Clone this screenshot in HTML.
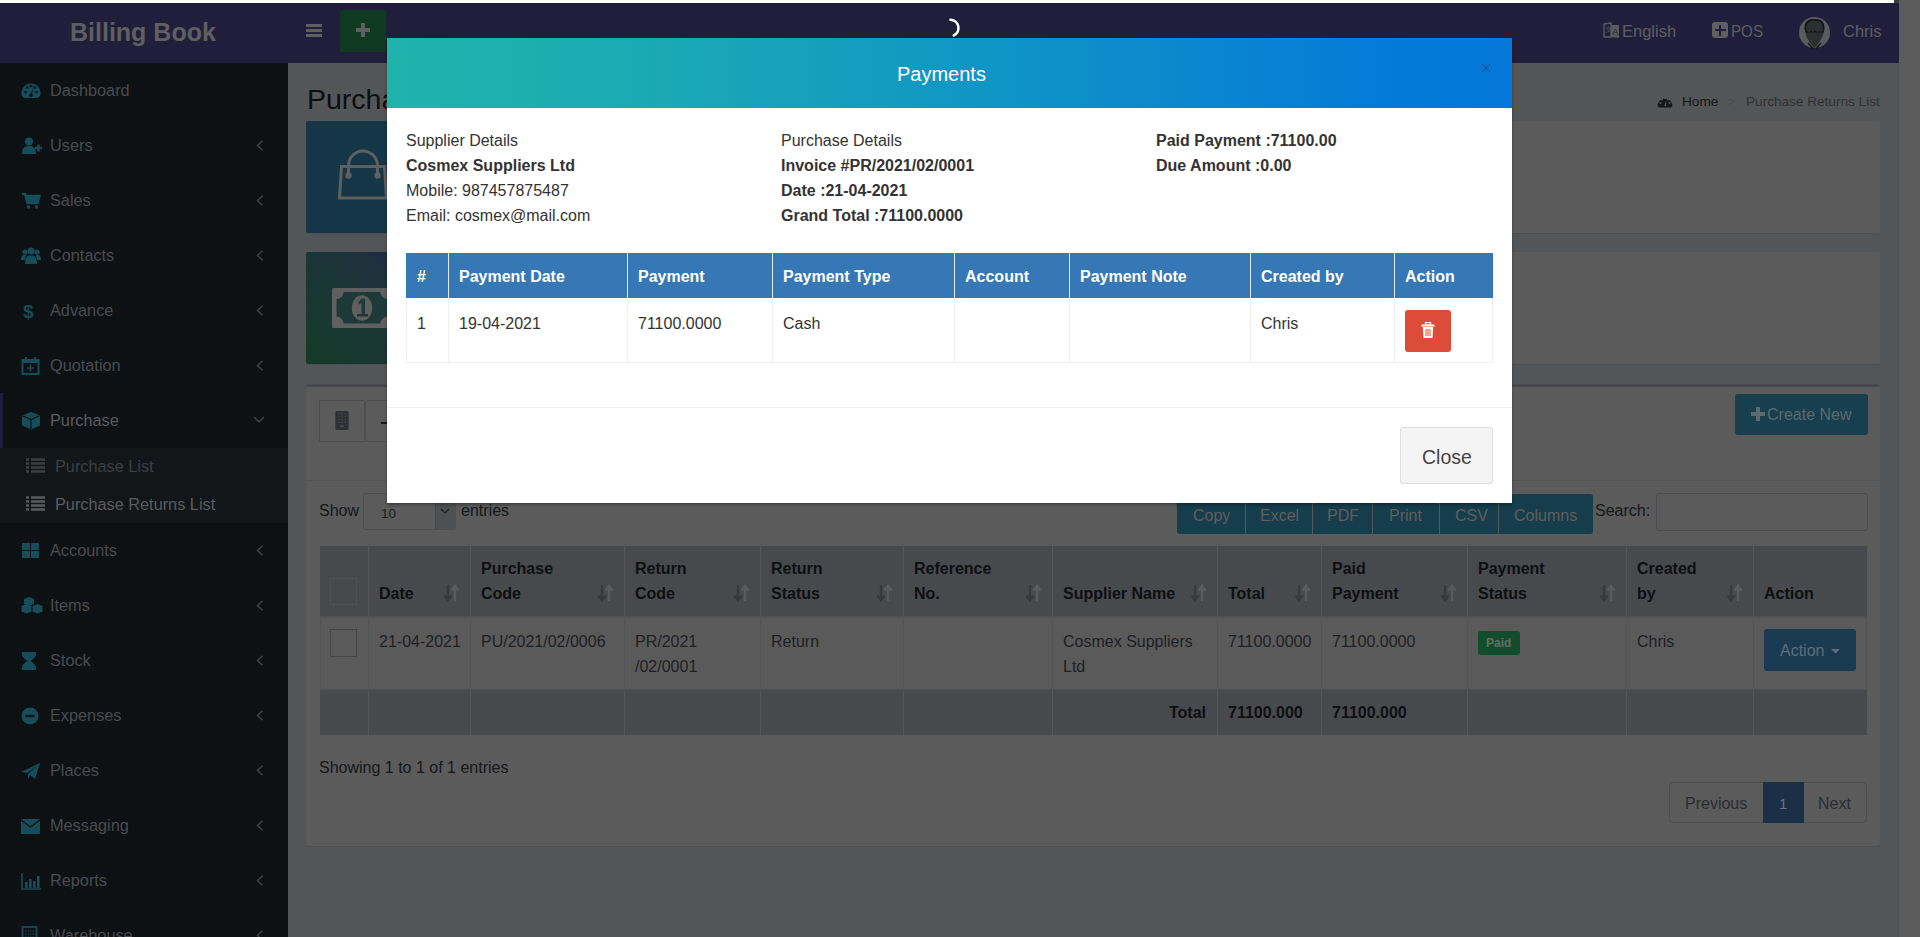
<!DOCTYPE html>
<html><head><meta charset="utf-8">
<style>
html,body{margin:0;padding:0}
body{-webkit-font-smoothing:antialiased;width:1920px;height:937px;overflow:hidden;position:relative;background:#545557;font-family:"Liberation Sans",sans-serif;font-size:16px;color:#333}
.a{position:absolute}
.t{position:absolute;white-space:nowrap;line-height:20px}
.b{font-weight:bold}
/* sidebar */
.si{position:absolute;left:50px;font-size:16.3px;color:#4a4b50;line-height:20px;white-space:nowrap}
.chev{position:absolute;left:257px;width:7px;height:10px}
.ic{position:absolute;left:21px}
</style></head>
<body>
<!-- top white strip -->
<div class="a" style="left:0;top:0;width:1894px;height:3px;background:#fff"></div>
<div class="a" style="left:1894px;top:0;width:5px;height:3px;background:#3c3c3c"></div>
<!-- right strip -->
<div class="a" style="left:1899px;top:0;width:21px;height:937px;background:#5c5c5c"></div>
<!-- navbar -->
<div class="a" style="left:0;top:3px;width:1899px;height:60px;background:#211e3c"></div>
<div class="t b" style="left:70px;top:20px;font-size:25px;line-height:25px;color:#5f5f5f">Billing Book</div>
<!-- hamburger -->
<div class="a" style="left:306px;top:24px;width:16px;height:3px;background:#5f5f60"></div>
<div class="a" style="left:306px;top:29px;width:16px;height:3px;background:#5f5f60"></div>
<div class="a" style="left:306px;top:34px;width:16px;height:3px;background:#5f5f60"></div>
<!-- green plus -->
<div class="a" style="left:340px;top:10px;width:46px;height:42px;background:#0e3a22;border-radius:2px"></div>
<div class="a" style="left:356px;top:28px;width:14px;height:4px;background:#5f5f60"></div>
<div class="a" style="left:361px;top:23px;width:4px;height:14px;background:#5f5f60"></div>
<!-- spinner -->
<svg class="a" style="left:940px;top:17px" width="24" height="22" viewBox="0 0 24 22"><path d="M10.5 2.8 A8.2 8.2 0 0 1 13.8 18.4" stroke="#fff" stroke-width="2.6" fill="none" stroke-linecap="round"/></svg>
<!-- English -->
<svg class="a" style="left:1603px;top:22px" width="17" height="17" viewBox="0 0 17 17"><path d="M1 2 L8 1 L8 15 L1 15 Z" fill="none" stroke="#5a5a5c" stroke-width="1.4"/><path d="M8 3 L16 3 L16 16 L8 15" fill="#5a5a5c"/><text x="9.2" y="12.5" font-size="9" font-family="Liberation Sans" fill="#211e3c">A</text><text x="2" y="10" font-size="7" font-family="Liberation Sans" fill="#5a5a5c">文</text></svg>
<div class="t" style="left:1622px;top:21px;font-size:16.5px;color:#5f5f60">English</div>
<!-- POS -->
<div class="a" style="left:1712px;top:22px;width:16px;height:16px;background:#5f5f60;border-radius:3px"></div>
<div class="a" style="left:1714.5px;top:29px;width:11px;height:2px;background:#211e3c"></div>
<div class="a" style="left:1719px;top:24.5px;width:2px;height:11px;background:#211e3c"></div>
<div class="t" style="left:1731px;top:21px;font-size:16.5px;transform:scaleX(0.92);transform-origin:0 0;color:#5f5f60">POS</div>
<!-- avatar -->
<svg class="a" style="left:1799px;top:17px" width="32" height="32" viewBox="0 0 32 32"><circle cx="15.5" cy="15.5" r="15.5" fill="#5c5c5e"/><path d="M6 12 C6 4 9.5 2.5 15.5 2.5 C21.5 2.5 25 4 25 12 C25 18 22 24 15.5 31 C9 24 6 18 6 12Z" fill="#2b2f30"/><path d="M6.3 13 C5.8 5 9.5 2.8 15.5 2.8 C21.5 2.8 25.2 5 24.7 13" fill="none" stroke="#0f1112" stroke-width="1.6"/><path d="M6 14.5 H25" stroke="#0f1112" stroke-width="1.8"/><path d="M8.5 14 h3 M13 14 h2 M17 14 h3 M21 14 h2" stroke="#50524f" stroke-width="0.7"/><path d="M9 26 L14 31.5 M22 26 L17 31.5" stroke="#0f1112" stroke-width="1.4"/></svg>
<div class="t" style="left:1843px;top:21px;font-size:16.5px;color:#5f5f60">Chris</div>


<!-- sidebar -->
<div class="a" style="left:0;top:63px;width:288px;height:874px;background:#0d1113"></div>
<div class="a" style="left:0;top:393px;width:3px;height:55px;background:#1f1d3d"></div>
<div class="a" style="left:0;top:448px;width:288px;height:75px;background:#121619"></div>
<svg class="a" style="left:26px;top:456.7px" width="20" height="17" viewBox="0 0 20 17"><path d="M0 2.5h3M0 6.5h3M0 10.5h3M0 14.5h3" stroke="#3c3e42" stroke-width="2.4"/><path d="M5 2.5h14M5 6.5h14M5 10.5h14M5 14.5h14" stroke="#3c3e42" stroke-width="2.4"/></svg>
<div class="si" style="left:55px;top:455.7px;color:#3c3e42">Purchase List</div>
<svg class="a" style="left:26px;top:494.5px" width="20" height="17" viewBox="0 0 20 17"><path d="M0 2.5h3M0 6.5h3M0 10.5h3M0 14.5h3" stroke="#5a5b5f" stroke-width="2.4"/><path d="M5 2.5h14M5 6.5h14M5 10.5h14M5 14.5h14" stroke="#5a5b5f" stroke-width="2.4"/></svg>
<div class="si" style="left:55px;top:493.5px;color:#5a5b5f">Purchase Returns List</div>
<svg class="a" style="left:21px;top:80.5px" width="24" height="20" viewBox="0 0 24 20"><path d="M1 15 A9.5 9.5 0 1 1 19 15 L17 17 L3 17 Z" fill="#174c5a"/><circle cx="4.5" cy="11" r="1.3" fill="#0d1113"/><circle cx="6.5" cy="6.5" r="1.3" fill="#0d1113"/><circle cx="10" cy="5" r="1.3" fill="#0d1113"/><circle cx="15.5" cy="11" r="1.3" fill="#0d1113"/><circle cx="13.5" cy="6.5" r="1.3" fill="#0d1113"/><path d="M9 15 L12 7 L11 15 Z" fill="#0d1113"/><circle cx="10" cy="14.5" r="1.8" fill="#0d1113"/></svg>
<div class="si" style="top:80.1px;color:#4a4b50">Dashboard</div>
<svg class="a" style="left:21px;top:135.5px" width="24" height="20" viewBox="0 0 24 20"><circle cx="8" cy="5.5" r="4" fill="#174c5a"/><path d="M1 18 C1 11 4 10 8 10 C12 10 15 11 15 18 Z" fill="#174c5a"/><path d="M14 12 h7 M17.5 8.5 v7" stroke="#174c5a" stroke-width="2.4"/></svg>
<div class="si" style="top:135.1px;color:#4a4b50">Users</div>
<svg class="a" style="left:256px;top:140.0px" width="8" height="11" viewBox="0 0 8 11"><path d="M6.5 0.8 L1.5 5.5 L6.5 10.2" stroke="#3f4145" stroke-width="1.5" fill="none"/></svg>
<svg class="a" style="left:21px;top:190.5px" width="24" height="20" viewBox="0 0 24 20"><path d="M1 3 h3 l2.5 9 h10 l2-7 h-13" fill="none" stroke="#174c5a" stroke-width="2.4"/><rect x="6" y="5" width="12" height="6" fill="#174c5a"/><circle cx="7.5" cy="16" r="1.8" fill="#174c5a"/><circle cx="15.5" cy="16" r="1.8" fill="#174c5a"/></svg>
<div class="si" style="top:190.1px;color:#4a4b50">Sales</div>
<svg class="a" style="left:256px;top:195.0px" width="8" height="11" viewBox="0 0 8 11"><path d="M6.5 0.8 L1.5 5.5 L6.5 10.2" stroke="#3f4145" stroke-width="1.5" fill="none"/></svg>
<svg class="a" style="left:21px;top:245.5px" width="24" height="20" viewBox="0 0 24 20"><circle cx="10" cy="5" r="3.5" fill="#174c5a"/><circle cx="4" cy="6" r="2.6" fill="#174c5a"/><circle cx="16" cy="6" r="2.6" fill="#174c5a"/><path d="M4 18 C4 11 6 9.5 10 9.5 C14 9.5 16 11 16 18 Z" fill="#174c5a"/><path d="M0 14 C0 10 1.5 9 4 9 L5 9 L4 14 Z M20 14 C20 10 18.5 9 16 9 L15 9 L16 14 Z" fill="#174c5a"/></svg>
<div class="si" style="top:245.1px;color:#4a4b50">Contacts</div>
<svg class="a" style="left:256px;top:250.0px" width="8" height="11" viewBox="0 0 8 11"><path d="M6.5 0.8 L1.5 5.5 L6.5 10.2" stroke="#3f4145" stroke-width="1.5" fill="none"/></svg>
<svg class="a" style="left:21px;top:300.5px" width="24" height="20" viewBox="0 0 24 20"><text x="2" y="17" font-family="Liberation Sans" font-weight="bold" font-size="19" fill="#174c5a">$</text></svg>
<div class="si" style="top:300.1px;color:#4a4b50">Advance</div>
<svg class="a" style="left:256px;top:305.0px" width="8" height="11" viewBox="0 0 8 11"><path d="M6.5 0.8 L1.5 5.5 L6.5 10.2" stroke="#3f4145" stroke-width="1.5" fill="none"/></svg>
<svg class="a" style="left:21px;top:355.5px" width="24" height="20" viewBox="0 0 24 20"><rect x="1.5" y="4" width="16" height="14" fill="none" stroke="#174c5a" stroke-width="2"/><rect x="1.5" y="4" width="16" height="3" fill="#174c5a"/><path d="M5 1 v5 M14 1 v5" stroke="#174c5a" stroke-width="2"/><path d="M6 12 h7 M9.5 8.5 v7" stroke="#174c5a" stroke-width="1.6"/></svg>
<div class="si" style="top:355.1px;color:#4a4b50">Quotation</div>
<svg class="a" style="left:256px;top:360.0px" width="8" height="11" viewBox="0 0 8 11"><path d="M6.5 0.8 L1.5 5.5 L6.5 10.2" stroke="#3f4145" stroke-width="1.5" fill="none"/></svg>
<svg class="a" style="left:21px;top:410.5px" width="24" height="20" viewBox="0 0 24 20"><path d="M10 1 L19 4.5 L19 14.5 L10 18.5 L1 14.5 L1 4.5 Z" fill="#174c5a"/><path d="M3 5.5 L10 8.5 L17 5.5 L10 3 Z" fill="#0d1113" opacity="0.0"/><path d="M10 8.5 L10 18 M1.5 4.8 L10 8.5 L18.5 4.8" stroke="#0d1113" stroke-width="1.2" fill="none"/></svg>
<div class="si" style="top:410.1px;color:#5b5b5e">Purchase</div>
<svg class="a" style="left:253px;top:415.5px" width="12" height="8" viewBox="0 0 12 8"><path d="M1 1 L6 6 L11 1" stroke="#3f4145" stroke-width="1.5" fill="none"/></svg>
<svg class="a" style="left:21px;top:540.5px" width="24" height="20" viewBox="0 0 24 20"><rect x="1" y="2" width="8" height="7" fill="#174c5a"/><rect x="10" y="2" width="8" height="7" fill="#174c5a"/><rect x="1" y="10" width="8" height="7" fill="#174c5a"/><rect x="10" y="10" width="8" height="7" fill="#174c5a"/></svg>
<div class="si" style="top:540.1px">Accounts</div>
<svg class="a" style="left:256px;top:545.0px" width="8" height="11" viewBox="0 0 8 11"><path d="M6.5 0.8 L1.5 5.5 L6.5 10.2" stroke="#3f4145" stroke-width="1.5" fill="none"/></svg>
<svg class="a" style="left:21px;top:595.5px" width="24" height="20" viewBox="0 0 24 20"><path d="M8 1 L13 3 L13 8 L8 10 L3 8 L3 3Z" fill="#174c5a"/><path d="M5.5 8 L10.5 10 L10.5 15.5 L5.5 17.5 L0.5 15.5 L0.5 10Z" fill="#174c5a"/><path d="M16.5 8 L21.5 10 L21.5 15.5 L16.5 17.5 L11.5 15.5 L11.5 10Z" fill="#174c5a"/></svg>
<div class="si" style="top:595.1px">Items</div>
<svg class="a" style="left:256px;top:600.0px" width="8" height="11" viewBox="0 0 8 11"><path d="M6.5 0.8 L1.5 5.5 L6.5 10.2" stroke="#3f4145" stroke-width="1.5" fill="none"/></svg>
<svg class="a" style="left:21px;top:650.5px" width="24" height="20" viewBox="0 0 24 20"><path d="M1 1 h14 v2 C15 7 10 9 10 10 C10 11 15 13 15 17 v2 h-14 v-2 C1 13 6 11 6 10 C6 9 1 7 1 3Z" fill="#174c5a"/></svg>
<div class="si" style="top:650.1px">Stock</div>
<svg class="a" style="left:256px;top:655.0px" width="8" height="11" viewBox="0 0 8 11"><path d="M6.5 0.8 L1.5 5.5 L6.5 10.2" stroke="#3f4145" stroke-width="1.5" fill="none"/></svg>
<svg class="a" style="left:21px;top:705.5px" width="24" height="20" viewBox="0 0 24 20"><circle cx="9" cy="10" r="8.5" fill="#174c5a"/><rect x="4.5" y="8.8" width="9" height="2.4" fill="#0d1113"/></svg>
<div class="si" style="top:705.1px">Expenses</div>
<svg class="a" style="left:256px;top:710.0px" width="8" height="11" viewBox="0 0 8 11"><path d="M6.5 0.8 L1.5 5.5 L6.5 10.2" stroke="#3f4145" stroke-width="1.5" fill="none"/></svg>
<svg class="a" style="left:21px;top:760.5px" width="24" height="20" viewBox="0 0 24 20"><path d="M0 11 L19 2 L14 18 L9 14 L7 18 L7 13 L16 5 L6 12 Z" fill="#174c5a"/></svg>
<div class="si" style="top:760.1px">Places</div>
<svg class="a" style="left:256px;top:765.0px" width="8" height="11" viewBox="0 0 8 11"><path d="M6.5 0.8 L1.5 5.5 L6.5 10.2" stroke="#3f4145" stroke-width="1.5" fill="none"/></svg>
<svg class="a" style="left:21px;top:815.5px" width="24" height="20" viewBox="0 0 24 20"><rect x="0" y="3" width="19" height="15" rx="1" fill="#174c5a"/><path d="M0 4 L9.5 11 L19 4" stroke="#0d1113" stroke-width="1.2" fill="none"/></svg>
<div class="si" style="top:815.1px">Messaging</div>
<svg class="a" style="left:256px;top:820.0px" width="8" height="11" viewBox="0 0 8 11"><path d="M6.5 0.8 L1.5 5.5 L6.5 10.2" stroke="#3f4145" stroke-width="1.5" fill="none"/></svg>
<svg class="a" style="left:21px;top:870.5px" width="24" height="20" viewBox="0 0 24 20"><path d="M1 2 v16 h19" stroke="#174c5a" stroke-width="1.6" fill="none"/><rect x="4" y="11" width="2.6" height="6" fill="#174c5a"/><rect x="8" y="8" width="2.6" height="9" fill="#174c5a"/><rect x="12" y="10" width="2.6" height="7" fill="#174c5a"/><rect x="16" y="5" width="2.6" height="12" fill="#174c5a"/></svg>
<div class="si" style="top:870.1px">Reports</div>
<svg class="a" style="left:256px;top:875.0px" width="8" height="11" viewBox="0 0 8 11"><path d="M6.5 0.8 L1.5 5.5 L6.5 10.2" stroke="#3f4145" stroke-width="1.5" fill="none"/></svg>
<svg class="a" style="left:21px;top:925.5px" width="24" height="20" viewBox="0 0 24 20"><rect x="1.5" y="1" width="14" height="18" fill="none" stroke="#174c5a" stroke-width="1.8"/><path d="M4 5 h9 M4 8 h9 M4 11 h9 M4 14 h9" stroke="#174c5a" stroke-width="1.2" stroke-dasharray="1.5 1"/></svg>
<div class="si" style="top:925.1px">Warehouse</div>
<svg class="a" style="left:256px;top:930.0px" width="8" height="11" viewBox="0 0 8 11"><path d="M6.5 0.8 L1.5 5.5 L6.5 10.2" stroke="#3f4145" stroke-width="1.5" fill="none"/></svg>


<!-- content -->
<!-- title -->
<div class="t" style="left:307px;top:83px;font-size:28.5px;line-height:32px;color:#0b0e10">Purchase Returns List</div>
<!-- breadcrumb -->
<svg class="a" style="left:1657px;top:95px" width="16" height="13" viewBox="0 0 16 13"><path d="M0.5 11 A7.5 7.5 0 1 1 15.5 11 L14 12.5 L2 12.5 Z" fill="#151719"/><circle cx="3.5" cy="8" r="1.1" fill="#545557"/><circle cx="5" cy="4.5" r="1.1" fill="#545557"/><circle cx="8" cy="3" r="1.1" fill="#545557"/><circle cx="11" cy="4.5" r="1.1" fill="#545557"/><circle cx="12.5" cy="8" r="1.1" fill="#545557"/><path d="M7 11 L9.5 5 L9 11Z" fill="#545557"/></svg>
<div class="t" style="left:1682px;top:92.5px;font-size:13.6px;line-height:18px;color:#151719">Home</div>
<div class="t" style="left:1728px;top:92.5px;font-size:12px;line-height:18px;color:#4a4b4e">&gt;</div>
<div class="t" style="left:1746px;top:92.5px;font-size:13.6px;line-height:18px;color:#2f3133">Purchase Returns List</div>

<!-- info box 1 -->
<div class="a" style="left:306px;top:121px;width:1574px;height:112px;background:#5b5b5b;border-radius:2px;box-shadow:0 1px 0 #4e4f51"></div>
<div class="a" style="left:306px;top:121px;width:112px;height:112px;background:#143646;border-radius:2px 0 0 2px"></div>
<svg class="a" style="left:330px;top:145px" width="60" height="60" viewBox="0 0 60 60"><path d="M18.5 30 V20.5 A14.5 14.5 0 0 1 47.5 20.5 V30" fill="none" stroke="#5f5f60" stroke-width="3"/><path d="M11.5 21.5 H54.5 L56.5 53 H9.5 Z" fill="none" stroke="#5f5f60" stroke-width="3"/><circle cx="18.5" cy="30.5" r="3.2" fill="#5f5f60"/><circle cx="47.5" cy="30.5" r="3.2" fill="#5f5f60"/></svg>

<!-- info box 2 -->
<div class="a" style="left:306px;top:252px;width:1574px;height:112px;background:#5b5b5b;border-radius:2px;box-shadow:0 1px 0 #4e4f51"></div>
<div class="a" style="left:306px;top:252px;width:112px;height:112px;background:linear-gradient(to bottom left,#232a45 0%,#1b3636 50%,#133b28 100%);border-radius:2px 0 0 2px"></div>
<svg class="a" style="left:332px;top:288px" width="60" height="40" viewBox="0 0 60 40"><rect x="0" y="0" width="60" height="40" rx="1.5" fill="#5f5f60"/><path d="M11.5 4 H48.5 A7 7 0 0 0 55.5 11 V28.6 A7 7 0 0 0 48.5 35.6 H11.5 A7 7 0 0 0 4.5 28.6 V11 A7 7 0 0 0 11.5 4 Z" fill="#1e3a36"/><ellipse cx="30" cy="20" rx="10.2" ry="12.8" fill="#5f5f60"/><path d="M29.5 10.5 H33 V26 H36 V28.5 H25 V26 H29.5 V15 L26.5 16.5 V14 Z" fill="#1e3a36"/></svg>

<!-- main box -->
<div class="a" style="left:306px;top:384px;width:1574px;height:462px;background:#5b5b5b;border-radius:3px;box-shadow:0 1px 0 #4e4f51"></div>
<div class="a" style="left:306px;top:384px;width:1574px;height:3px;background:#48494c;border-radius:3px 3px 0 0"></div>
<div class="a" style="left:306px;top:480px;width:1574px;height:1px;background:#535456"></div>
<!-- top buttons -->
<div class="a" style="left:319px;top:400px;width:46px;height:42px;box-sizing:border-box;border:1px solid #4d4e50"></div>
<div class="a" style="left:365px;top:400px;width:60px;height:42px;box-sizing:border-box;border:1px solid #4d4e50;border-radius:3px"></div>
<div class="a" style="left:381px;top:421.5px;width:6px;height:2px;background:#151719"></div>
<svg class="a" style="left:335px;top:411px" width="14" height="19" viewBox="0 0 14 20"><rect x="0" y="0" width="14" height="20" rx="1.5" fill="#2e3133"/><path d="M3 3h1.5M6.3 3h1.5M9.6 3h1.5M3 6h1.5M6.3 6h1.5M9.6 6h1.5M3 9h1.5M6.3 9h1.5M9.6 9h1.5M3 12h1.5M6.3 12h1.5M9.6 12h1.5" stroke="#4a4c4e" stroke-width="1.2"/><rect x="5" y="15" width="4" height="2" fill="#4a4c4e"/></svg>
<!-- create new -->
<div class="a" style="left:1735px;top:394px;width:133px;height:41px;background:#173f4e;border-radius:3px"></div>
<div class="a" style="left:1751px;top:412px;width:14px;height:4px;background:#5d6a6e"></div>
<div class="a" style="left:1756px;top:407px;width:4px;height:14px;background:#5d6a6e"></div>
<div class="t" style="left:1767px;top:405px;font-size:16px;color:#5d6a6e">Create New</div>

<!-- show entries -->
<div class="t" style="left:319px;top:501px;font-size:16px;color:#151719">Show</div>
<div class="a" style="left:363px;top:493px;width:93px;height:37px;box-sizing:border-box;border:1px solid #4d4e50;border-radius:3px"></div>
<div class="a" style="left:435px;top:494px;width:20px;height:35px;background:#4e5052;border-left:1px solid #48494c"></div>
<svg class="a" style="left:440px;top:508px" width="10" height="7" viewBox="0 0 10 7"><path d="M1 1 L5 5 L9 1" stroke="#1e2022" stroke-width="1.3" fill="none"/></svg>
<div class="t" style="left:381px;top:504px;font-size:13.5px;color:#1a1c1e">10</div>
<div class="t" style="left:461px;top:501px;font-size:16px;color:#151719">entries</div>

<!-- export buttons -->
<div class="a" style="left:1177px;top:494px;width:416px;height:40px;background:#153d4b;border-radius:3px"></div>
<div class="a" style="left:1245px;top:494px;width:1px;height:40px;background:#565758"></div>
<div class="a" style="left:1312px;top:494px;width:1px;height:40px;background:#565758"></div>
<div class="a" style="left:1372px;top:494px;width:1px;height:40px;background:#565758"></div>
<div class="a" style="left:1439px;top:494px;width:1px;height:40px;background:#565758"></div>
<div class="a" style="left:1498px;top:494px;width:1px;height:40px;background:#565758"></div>
<div class="t" style="left:1193px;top:505.5px;font-size:16px;color:#615e5e">Copy</div>
<div class="t" style="left:1260px;top:505.5px;font-size:16px;color:#615e5e">Excel</div>
<div class="t" style="left:1327px;top:505.5px;font-size:16px;color:#615e5e">PDF</div>
<div class="t" style="left:1389px;top:505.5px;font-size:16px;color:#615e5e">Print</div>
<div class="t" style="left:1455px;top:505.5px;font-size:16px;color:#615e5e">CSV</div>
<div class="t" style="left:1514px;top:505.5px;font-size:16px;color:#615e5e">Columns</div>
<div class="t" style="left:1595px;top:501px;font-size:16px;color:#151719">Search:</div>
<div class="a" style="left:1656px;top:493px;width:212px;height:38px;box-sizing:border-box;border:1px solid #4d4e50;border-radius:3px"></div>

<div class="a" style="left:320px;top:546px;width:1547px;height:70px;background:#48494d"></div>
<div class="a" style="left:320px;top:616px;width:1547px;height:74px;background:#5a5a5b"></div>
<div class="a" style="left:320px;top:690px;width:1547px;height:45px;background:#48494d"></div>
<div class="a" style="left:320px;top:616px;width:1547px;height:2px;background:#515254"></div>
<div class="a" style="left:320px;top:689px;width:1547px;height:1px;background:#505153"></div>
<div class="a" style="left:368px;top:546px;width:1px;height:70px;background:#545557"></div>
<div class="a" style="left:368px;top:616px;width:1px;height:74px;background:#535456"></div>
<div class="a" style="left:368px;top:690px;width:1px;height:45px;background:#545557"></div>
<div class="a" style="left:470px;top:546px;width:1px;height:70px;background:#545557"></div>
<div class="a" style="left:470px;top:616px;width:1px;height:74px;background:#535456"></div>
<div class="a" style="left:470px;top:690px;width:1px;height:45px;background:#545557"></div>
<div class="a" style="left:624px;top:546px;width:1px;height:70px;background:#545557"></div>
<div class="a" style="left:624px;top:616px;width:1px;height:74px;background:#535456"></div>
<div class="a" style="left:624px;top:690px;width:1px;height:45px;background:#545557"></div>
<div class="a" style="left:760px;top:546px;width:1px;height:70px;background:#545557"></div>
<div class="a" style="left:760px;top:616px;width:1px;height:74px;background:#535456"></div>
<div class="a" style="left:760px;top:690px;width:1px;height:45px;background:#545557"></div>
<div class="a" style="left:903px;top:546px;width:1px;height:70px;background:#545557"></div>
<div class="a" style="left:903px;top:616px;width:1px;height:74px;background:#535456"></div>
<div class="a" style="left:903px;top:690px;width:1px;height:45px;background:#545557"></div>
<div class="a" style="left:1052px;top:546px;width:1px;height:70px;background:#545557"></div>
<div class="a" style="left:1052px;top:616px;width:1px;height:74px;background:#535456"></div>
<div class="a" style="left:1052px;top:690px;width:1px;height:45px;background:#545557"></div>
<div class="a" style="left:1217px;top:546px;width:1px;height:70px;background:#545557"></div>
<div class="a" style="left:1217px;top:616px;width:1px;height:74px;background:#535456"></div>
<div class="a" style="left:1217px;top:690px;width:1px;height:45px;background:#545557"></div>
<div class="a" style="left:1321px;top:546px;width:1px;height:70px;background:#545557"></div>
<div class="a" style="left:1321px;top:616px;width:1px;height:74px;background:#535456"></div>
<div class="a" style="left:1321px;top:690px;width:1px;height:45px;background:#545557"></div>
<div class="a" style="left:1467px;top:546px;width:1px;height:70px;background:#545557"></div>
<div class="a" style="left:1467px;top:616px;width:1px;height:74px;background:#535456"></div>
<div class="a" style="left:1467px;top:690px;width:1px;height:45px;background:#545557"></div>
<div class="a" style="left:1626px;top:546px;width:1px;height:70px;background:#545557"></div>
<div class="a" style="left:1626px;top:616px;width:1px;height:74px;background:#535456"></div>
<div class="a" style="left:1626px;top:690px;width:1px;height:45px;background:#545557"></div>
<div class="a" style="left:1753px;top:546px;width:1px;height:70px;background:#545557"></div>
<div class="a" style="left:1753px;top:616px;width:1px;height:74px;background:#535456"></div>
<div class="a" style="left:1753px;top:690px;width:1px;height:45px;background:#545557"></div>
<div class="a" style="left:320px;top:616px;width:1px;height:74px;background:#535456"></div>
<div class="a" style="left:1866px;top:616px;width:1px;height:74px;background:#535456"></div>
<div class="t" style="left:379px;top:583.7px;font-size:16px;font-weight:bold;color:#0d0f11">Date</div>
<svg class="a" style="left:443px;top:584px" width="17" height="18" viewBox="0 0 17 18"><path d="M5 1 V15 M1.5 11.5 L5 16 L8.5 11.5" stroke="#38393c" stroke-width="2.4" fill="none"/><path d="M12 17 V3 M8.5 6.5 L12 2 L15.5 6.5" stroke="#5a5b5e" stroke-width="2.4" fill="none"/></svg>
<div class="t" style="left:481px;top:559.0px;font-size:16px;font-weight:bold;color:#0d0f11">Purchase</div>
<div class="t" style="left:481px;top:583.7px;font-size:16px;font-weight:bold;color:#0d0f11">Code</div>
<svg class="a" style="left:597px;top:584px" width="17" height="18" viewBox="0 0 17 18"><path d="M5 1 V15 M1.5 11.5 L5 16 L8.5 11.5" stroke="#38393c" stroke-width="2.4" fill="none"/><path d="M12 17 V3 M8.5 6.5 L12 2 L15.5 6.5" stroke="#5a5b5e" stroke-width="2.4" fill="none"/></svg>
<div class="t" style="left:635px;top:559.0px;font-size:16px;font-weight:bold;color:#0d0f11">Return</div>
<div class="t" style="left:635px;top:583.7px;font-size:16px;font-weight:bold;color:#0d0f11">Code</div>
<svg class="a" style="left:733px;top:584px" width="17" height="18" viewBox="0 0 17 18"><path d="M5 1 V15 M1.5 11.5 L5 16 L8.5 11.5" stroke="#38393c" stroke-width="2.4" fill="none"/><path d="M12 17 V3 M8.5 6.5 L12 2 L15.5 6.5" stroke="#5a5b5e" stroke-width="2.4" fill="none"/></svg>
<div class="t" style="left:771px;top:559.0px;font-size:16px;font-weight:bold;color:#0d0f11">Return</div>
<div class="t" style="left:771px;top:583.7px;font-size:16px;font-weight:bold;color:#0d0f11">Status</div>
<svg class="a" style="left:876px;top:584px" width="17" height="18" viewBox="0 0 17 18"><path d="M5 1 V15 M1.5 11.5 L5 16 L8.5 11.5" stroke="#38393c" stroke-width="2.4" fill="none"/><path d="M12 17 V3 M8.5 6.5 L12 2 L15.5 6.5" stroke="#5a5b5e" stroke-width="2.4" fill="none"/></svg>
<div class="t" style="left:914px;top:559.0px;font-size:16px;font-weight:bold;color:#0d0f11">Reference</div>
<div class="t" style="left:914px;top:583.7px;font-size:16px;font-weight:bold;color:#0d0f11">No.</div>
<svg class="a" style="left:1025px;top:584px" width="17" height="18" viewBox="0 0 17 18"><path d="M5 1 V15 M1.5 11.5 L5 16 L8.5 11.5" stroke="#38393c" stroke-width="2.4" fill="none"/><path d="M12 17 V3 M8.5 6.5 L12 2 L15.5 6.5" stroke="#5a5b5e" stroke-width="2.4" fill="none"/></svg>
<div class="t" style="left:1063px;top:583.7px;font-size:16px;font-weight:bold;color:#0d0f11">Supplier Name</div>
<svg class="a" style="left:1190px;top:584px" width="17" height="18" viewBox="0 0 17 18"><path d="M5 1 V15 M1.5 11.5 L5 16 L8.5 11.5" stroke="#38393c" stroke-width="2.4" fill="none"/><path d="M12 17 V3 M8.5 6.5 L12 2 L15.5 6.5" stroke="#5a5b5e" stroke-width="2.4" fill="none"/></svg>
<div class="t" style="left:1228px;top:583.7px;font-size:16px;font-weight:bold;color:#0d0f11">Total</div>
<svg class="a" style="left:1294px;top:584px" width="17" height="18" viewBox="0 0 17 18"><path d="M5 1 V15 M1.5 11.5 L5 16 L8.5 11.5" stroke="#38393c" stroke-width="2.4" fill="none"/><path d="M12 17 V3 M8.5 6.5 L12 2 L15.5 6.5" stroke="#5a5b5e" stroke-width="2.4" fill="none"/></svg>
<div class="t" style="left:1332px;top:559.0px;font-size:16px;font-weight:bold;color:#0d0f11">Paid</div>
<div class="t" style="left:1332px;top:583.7px;font-size:16px;font-weight:bold;color:#0d0f11">Payment</div>
<svg class="a" style="left:1440px;top:584px" width="17" height="18" viewBox="0 0 17 18"><path d="M5 1 V15 M1.5 11.5 L5 16 L8.5 11.5" stroke="#38393c" stroke-width="2.4" fill="none"/><path d="M12 17 V3 M8.5 6.5 L12 2 L15.5 6.5" stroke="#5a5b5e" stroke-width="2.4" fill="none"/></svg>
<div class="t" style="left:1478px;top:559.0px;font-size:16px;font-weight:bold;color:#0d0f11">Payment</div>
<div class="t" style="left:1478px;top:583.7px;font-size:16px;font-weight:bold;color:#0d0f11">Status</div>
<svg class="a" style="left:1599px;top:584px" width="17" height="18" viewBox="0 0 17 18"><path d="M5 1 V15 M1.5 11.5 L5 16 L8.5 11.5" stroke="#38393c" stroke-width="2.4" fill="none"/><path d="M12 17 V3 M8.5 6.5 L12 2 L15.5 6.5" stroke="#5a5b5e" stroke-width="2.4" fill="none"/></svg>
<div class="t" style="left:1637px;top:559.0px;font-size:16px;font-weight:bold;color:#0d0f11">Created</div>
<div class="t" style="left:1637px;top:583.7px;font-size:16px;font-weight:bold;color:#0d0f11">by</div>
<svg class="a" style="left:1726px;top:584px" width="17" height="18" viewBox="0 0 17 18"><path d="M5 1 V15 M1.5 11.5 L5 16 L8.5 11.5" stroke="#38393c" stroke-width="2.4" fill="none"/><path d="M12 17 V3 M8.5 6.5 L12 2 L15.5 6.5" stroke="#5a5b5e" stroke-width="2.4" fill="none"/></svg>
<div class="t" style="left:1764px;top:583.7px;font-size:16px;font-weight:bold;color:#0d0f11">Action</div>
<div class="a" style="left:330px;top:578px;width:27px;height:27px;box-sizing:border-box;border:1px dotted #56575a"></div>
<div class="a" style="left:330px;top:629px;width:27px;height:28px;box-sizing:border-box;border:1px solid #434447"></div>
<div class="t" style="left:379px;top:632.0px;font-size:16px;color:#1e2022">21-04-2021</div>
<div class="t" style="left:481px;top:632.0px;font-size:16px;color:#1e2022">PU/2021/02/0006</div>
<div class="t" style="left:635px;top:632.0px;font-size:16px;color:#1e2022">PR/2021</div>
<div class="t" style="left:635px;top:657.0px;font-size:16px;color:#1e2022">/02/0001</div>
<div class="t" style="left:771px;top:632.0px;font-size:16px;color:#1e2022">Return</div>
<div class="t" style="left:1063px;top:632.0px;font-size:16px;color:#1e2022">Cosmex Suppliers</div>
<div class="t" style="left:1063px;top:657.0px;font-size:16px;color:#1e2022">Ltd</div>
<div class="t" style="left:1228px;top:632.0px;font-size:16px;color:#1e2022">71100.0000</div>
<div class="t" style="left:1332px;top:632.0px;font-size:16px;color:#1e2022">71100.0000</div>
<div class="t" style="left:1637px;top:632.0px;font-size:16px;color:#1e2022">Chris</div>
<div class="t" style="right:714px;top:703.0px;font-size:16px;font-weight:bold;color:#0d0f11">Total</div>
<div class="t" style="left:1228px;top:703.0px;font-size:16px;font-weight:bold;color:#0d0f11">71100.000</div>
<div class="t" style="left:1332px;top:703.0px;font-size:16px;font-weight:bold;color:#0d0f11">71100.000</div>
<div class="a" style="left:1478px;top:631px;width:42px;height:24px;background:#134b2d;border-radius:3px"></div>
<div class="t" style="left:1486px;top:634px;font-size:12px;line-height:18px;font-weight:bold;color:#607066">Paid</div>
<div class="a" style="left:1764px;top:629px;width:92px;height:42px;background:#193a50;border-radius:3px"></div>
<div class="t" style="left:1780px;top:641px;font-size:16px;color:#5f6e7a">Action</div>
<svg class="a" style="left:1831px;top:649px" width="9" height="5" viewBox="0 0 9 5"><path d="M0 0 H9 L4.5 4.5Z" fill="#5f6e7a"/></svg>


<div class="t" style="left:319px;top:758px;font-size:16px;color:#151719">Showing 1 to 1 of 1 entries</div>
<!-- pagination -->
<div class="a" style="left:1669px;top:782px;width:198px;height:41px;box-sizing:border-box;border:1px solid #4d4e50;border-radius:4px"></div>
<div class="a" style="left:1763px;top:782px;width:41px;height:41px;background:#1b2f47"></div>
<div class="t" style="left:1685px;top:794px;font-size:16px;color:#2a2d2f">Previous</div>
<div class="t" style="left:1779px;top:794px;font-size:15px;color:#6a7480">1</div>
<div class="t" style="left:1818px;top:794px;font-size:16px;color:#2a2d2f">Next</div>


<!-- modal -->
<div class="a" style="left:387px;top:38px;width:1125px;height:465px;background:#fff;box-shadow:0 2px 3px rgba(0,0,0,.3)"></div>
<div class="a" style="left:387px;top:38px;width:1125px;height:70px;background:linear-gradient(to right,#20b3ab 0%,#1aa9b5 25%,#0f94c6 55%,#0579d8 90%,#0477d9 100%)"></div>
<div class="t" style="left:897px;top:63px;font-size:20px;line-height:22px;color:#fff">Payments</div>
<div class="a" style="left:387px;top:407px;width:1125px;height:1px;background:#f0f0f0"></div>
<svg class="a" style="left:1481px;top:63px" width="10" height="10" viewBox="0 0 10 10"><path d="M1 1 L9 9 M9 1 L1 9" stroke="#1a4a78" stroke-width="1.3" stroke-dasharray="1 1"/></svg>
<div class="t" style="left:406px;top:131.16px;font-size:16px;color:#333">Supplier Details</div>
<div class="t" style="left:406px;top:156.16px;font-size:16px;font-weight:bold;color:#333">Cosmex Suppliers Ltd</div>
<div class="t" style="left:406px;top:181.26px;font-size:16px;color:#333">Mobile: 987457875487</div>
<div class="t" style="left:406px;top:206.26px;font-size:16px;color:#333">Email: cosmex@mail.com</div>
<div class="t" style="left:781px;top:131.16px;font-size:16px;color:#333">Purchase Details</div>
<div class="t" style="left:781px;top:156.16px;font-size:16px;font-weight:bold;color:#333">Invoice #PR/2021/02/0001</div>
<div class="t" style="left:781px;top:181.26px;font-size:16px;font-weight:bold;color:#333">Date :21-04-2021</div>
<div class="t" style="left:781px;top:206.26px;font-size:16px;font-weight:bold;color:#333">Grand Total :71100.0000</div>
<div class="t" style="left:1156px;top:131.16px;font-size:16px;font-weight:bold;color:#333">Paid Payment :71100.00</div>
<div class="t" style="left:1156px;top:156.16px;font-size:16px;font-weight:bold;color:#333">Due Amount :0.00</div>
<div class="a" style="left:406px;top:253px;width:1087px;height:110px;box-sizing:border-box;border:1px solid #efefef"></div>
<div class="a" style="left:406px;top:253px;width:1087px;height:45px;background:#3578b5"></div>
<div class="a" style="left:448px;top:253px;width:1px;height:45px;background:#e4ecf4"></div>
<div class="a" style="left:448px;top:298px;width:1px;height:64px;background:#efefef"></div>
<div class="a" style="left:627px;top:253px;width:1px;height:45px;background:#e4ecf4"></div>
<div class="a" style="left:627px;top:298px;width:1px;height:64px;background:#efefef"></div>
<div class="a" style="left:772px;top:253px;width:1px;height:45px;background:#e4ecf4"></div>
<div class="a" style="left:772px;top:298px;width:1px;height:64px;background:#efefef"></div>
<div class="a" style="left:954px;top:253px;width:1px;height:45px;background:#e4ecf4"></div>
<div class="a" style="left:954px;top:298px;width:1px;height:64px;background:#efefef"></div>
<div class="a" style="left:1069px;top:253px;width:1px;height:45px;background:#e4ecf4"></div>
<div class="a" style="left:1069px;top:298px;width:1px;height:64px;background:#efefef"></div>
<div class="a" style="left:1250px;top:253px;width:1px;height:45px;background:#e4ecf4"></div>
<div class="a" style="left:1250px;top:298px;width:1px;height:64px;background:#efefef"></div>
<div class="a" style="left:1394px;top:253px;width:1px;height:45px;background:#e4ecf4"></div>
<div class="a" style="left:1394px;top:298px;width:1px;height:64px;background:#efefef"></div>
<div class="t" style="left:417px;top:267.16px;font-size:16px;font-weight:bold;color:#fff">#</div>
<div class="t" style="left:459px;top:267.16px;font-size:16px;font-weight:bold;color:#fff">Payment Date</div>
<div class="t" style="left:638px;top:267.16px;font-size:16px;font-weight:bold;color:#fff">Payment</div>
<div class="t" style="left:783px;top:267.16px;font-size:16px;font-weight:bold;color:#fff">Payment Type</div>
<div class="t" style="left:965px;top:267.16px;font-size:16px;font-weight:bold;color:#fff">Account</div>
<div class="t" style="left:1080px;top:267.16px;font-size:16px;font-weight:bold;color:#fff">Payment Note</div>
<div class="t" style="left:1261px;top:267.16px;font-size:16px;font-weight:bold;color:#fff">Created by</div>
<div class="t" style="left:1405px;top:267.16px;font-size:16px;font-weight:bold;color:#fff">Action</div>
<div class="t" style="left:417px;top:314.46px;font-size:16px;color:#333">1</div>
<div class="t" style="left:459px;top:314.46px;font-size:16px;color:#333">19-04-2021</div>
<div class="t" style="left:638px;top:314.46px;font-size:16px;color:#333">71100.0000</div>
<div class="t" style="left:783px;top:314.46px;font-size:16px;color:#333">Cash</div>
<div class="t" style="left:1261px;top:314.46px;font-size:16px;color:#333">Chris</div>
<div class="a" style="left:1405px;top:310px;width:46px;height:42px;background:#dd4b39;border-radius:3px"></div>
<svg class="a" style="left:1421px;top:322px" width="14" height="17" viewBox="0 0 14 17"><rect x="0.5" y="2.5" width="13" height="2" fill="#fff"/><rect x="4.5" y="0.5" width="5" height="2.5" fill="none" stroke="#fff" stroke-width="1.2"/><path d="M1.8 5 H12.2 L11.5 16 H2.5 Z" fill="#fff"/><path d="M5 7 V14 M7 7 V14 M9 7 V14" stroke="#dd4b39" stroke-width="1"/></svg>
<div class="a" style="left:1400px;top:427px;width:93px;height:57px;box-sizing:border-box;background:#f4f4f4;border:1px solid #ddd;border-radius:3px"></div>
<div class="t" style="left:1422px;top:446.74px;font-size:19.5px;color:#444">Close</div>

</body></html>
